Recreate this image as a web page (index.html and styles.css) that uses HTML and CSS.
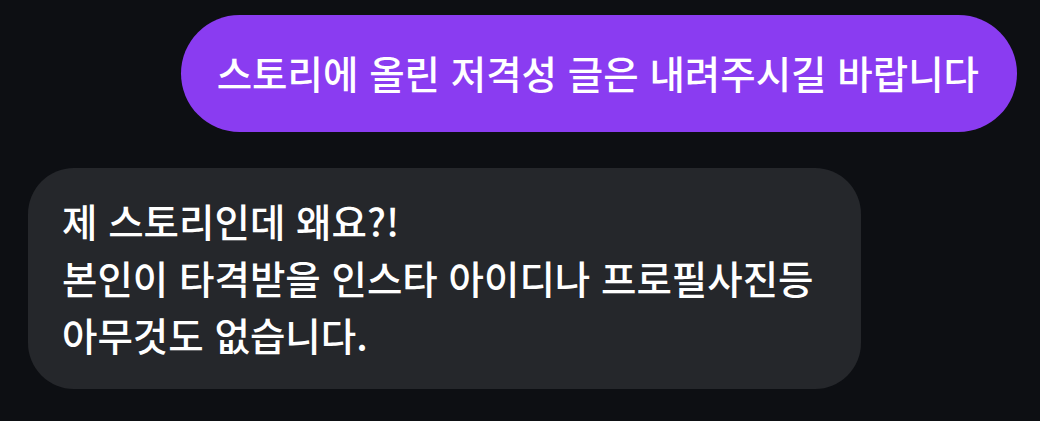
FILE: index.html
```html
<!DOCTYPE html>
<html lang="ko">
<head>
<meta charset="utf-8">
<link rel="stylesheet" href="styles.css">
</head>
<body>
<div class="chat">
  <div class="row out">
    <div class="bubble sent">스토리에 올린 저격성 글은 내려주시길 바랍니다</div>
  </div>
  <div class="row in">
    <div class="bubble recv">제 스토리인데 왜요?!<br>본인이 타격받을 인스타 아이디나 프로필사진등<br>아무것도 없습니다.</div>
  </div>
</div>
</body>
</html>
```

FILE: styles.css
```css
html, body {
  margin: 0;
  padding: 0;
  background: #0d0f13;
}
body {
  width: 1040px;
  height: 421px;
  overflow: hidden;
  font-family: "Noto Sans CJK KR", "Noto Sans", sans-serif;
  color: #ffffff;
}
.chat {
  display: flex;
  flex-direction: column;
  gap: 36px;
  padding: 15px 23px 0 28px;
}
.row {
  display: flex;
}
.row.out {
  justify-content: flex-end;
}
.row.in {
  justify-content: flex-start;
}
.bubble {
  font-size: 38.5px;
  font-weight: 500;
  line-height: 57px;
  box-sizing: border-box;
}
.sent {
  background: #8a3cf1;
  border-radius: 59px;
  height: 117px;
  padding: 29px 38px 29px 36px;
  white-space: nowrap;
}
.recv {
  background: #25272b;
  border-radius: 46px;
  width: 833px;
  padding: 24px 34px 26px;
}
```
